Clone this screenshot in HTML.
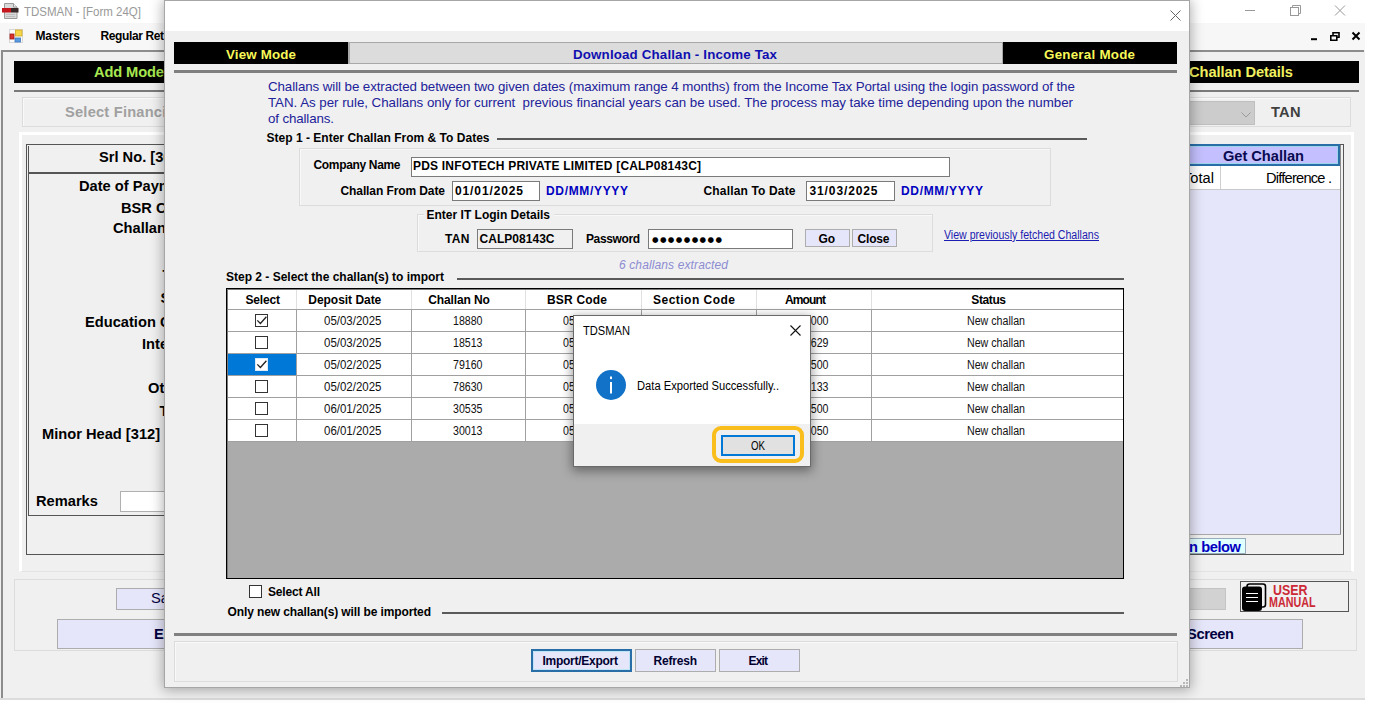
<!DOCTYPE html>
<html><head><meta charset="utf-8"><title>TDSMAN - [Form 24Q]</title><style>
html,body{margin:0;padding:0;}
body{width:1377px;height:703px;overflow:hidden;background:#fff;font-family:'Liberation Sans',sans-serif;}
#root{position:relative;width:1377px;height:703px;overflow:hidden;}
#root>div{position:absolute;}
.t{white-space:pre;}
svg{display:block;}
</style></head><body><div id="root">
<div style="left:0px;top:0px;width:1365px;height:700px;background:#f0f0f0;"></div>
<div style="left:0px;top:0px;width:1365px;height:23px;background:#fff;"></div>
<div style="left:0px;top:23px;width:1365px;height:27px;background:#f7f7f7;"></div>
<div style="left:1px;top:50px;width:1363px;height:2px;background:#8c8c8c;"></div>
<div style="left:1px;top:50px;width:2px;height:648px;background:#8c8c8c;"></div>
<div style="left:0px;top:698px;width:1365px;height:2px;background:#dcdcdc;"></div>
<div style="left:2px;top:3px;width:17px;height:16px;"><svg width="17" height="16" viewBox="0 0 17 16"><path d="M2.5 .5h9l3.5 3.5v11.5h-12.5z" fill="#d9d9d9" stroke="#9a9a9a" stroke-width="1"/><path d="M11.5 .5v3.5h3.5" fill="#f4f4f4" stroke="#9a9a9a" stroke-width="1"/><rect x="0" y="5" width="9" height="4.5" fill="#c4161c"/><rect x="9" y="5" width="7.5" height="4.5" fill="#3a2a2a"/><rect x="4" y="11" width="9" height="1" fill="#bdbdbd"/><rect x="4" y="13" width="9" height="1" fill="#bdbdbd"/></svg></div>
<div class="t" style="left:24px;top:5.86px;font-size:12px;line-height:12px;color:#999;transform:scaleX(0.9589);transform-origin:0 0;">TDSMAN - [Form 24Q]</div>
<div style="left:1244px;top:0px;width:121px;height:23px;"><svg width="121" height="23" viewBox="0 0 121 23"><g stroke="#999" stroke-width="1" fill="none"><path d="M1 10.5h10"/><rect x="46.5" y="7.5" width="8" height="8"/><path d="M48.5 7.5v-2h8v8h-2"/><path d="M91 5.500l10 10M101 5.500l-10 10"/></g></svg></div>
<div style="left:9px;top:29px;width:15px;height:14px;"><svg width="15" height="14" viewBox="0 0 15 14"><rect x=".5" y=".5" width="13" height="13" fill="#fafafa" stroke="#d8d8d8"/><rect x="1" y="5" width="4" height="5" fill="#d9332b" stroke="#a01818" stroke-width=".8"/><rect x="6.500" y="1" width="6.500" height="6" fill="#f6d648" stroke="#d0a820" stroke-width=".8"/><rect x="6" y="9" width="5.500" height="4" fill="#5b9be0" stroke="#3b78c0" stroke-width=".8"/></svg></div>
<div class="t" style="left:35.5px;top:29.86px;font-size:12px;line-height:12px;color:#000;font-weight:bold;letter-spacing:-0.143px;">Masters</div>
<div class="t" style="left:100.5px;top:29.86px;font-size:12px;line-height:12px;color:#000;font-weight:bold;letter-spacing:-0.382px;">Regular Returns</div>
<div style="left:1308px;top:28px;width:56px;height:16px;"><svg width="56" height="16" viewBox="0 0 56 16"><g fill="none" stroke="#000" stroke-width="1.6"><path d="M3 11.200h6" stroke-width="2"/><path d="M22.800 7.800h6v4.400h-6z"/><path d="M25 7.500v-2.700h6v4.400h-2"/><path d="M44.500 4.500l7 7M51.500 4.500l-7 7" stroke-width="2"/></g></svg></div>
<div style="left:14px;top:61px;width:1345px;height:22px;background:#000;"></div>
<div class="t" style="left:94px;top:64.6px;font-size:14.67px;line-height:14.67px;color:#a8e850;font-weight:bold;letter-spacing:-0.118px;">Add Mode</div>
<div class="t" style="left:1189px;top:64.6px;font-size:14.67px;line-height:14.67px;color:#f0f060;font-weight:bold;letter-spacing:-0.076px;">Challan Details</div>
<div style="left:14px;top:90px;width:1345px;height:2px;background:#7a7a7a;"></div>
<div style="left:22px;top:97px;width:1329px;height:30px;border:1px solid #dcdcdc;box-sizing:border-box;box-shadow:inset 1px 1px 0 #f8f8f8;"></div>
<div class="t" style="left:65px;top:104.6px;font-size:14.67px;line-height:14.67px;color:#a0a0a0;font-weight:bold;letter-spacing:0.209px;">Select Financial Year</div>
<div style="left:1100px;top:101px;width:155px;height:23.5px;background:#cccccc;border:1px solid #bfbfbf;box-sizing:border-box;"></div>
<div style="left:1241px;top:111px;width:10px;height:8px;"><svg width="10" height="8" viewBox="0 0 10 8"><path d="M.5 1.500l4.500 4.500 4.500-4.500" fill="none" stroke="#9a9a9a" stroke-width="1"/></svg></div>
<div class="t" style="left:1271px;top:104.6px;font-size:14.67px;line-height:14.67px;color:#404040;font-weight:bold;letter-spacing:0.234px;">TAN</div>
<div style="left:19px;top:132px;width:1335px;height:440px;border:3px solid #fff;border-bottom:1px solid #e4e4e4;box-sizing:border-box;"></div>
<div style="left:26px;top:144px;width:1318px;height:411px;border:1px solid #555;box-sizing:border-box;"></div>
<div style="left:28px;top:146px;width:1313px;height:28px;border:1px solid #555;border-width:0 0 2px 1px;box-sizing:border-box;"></div>
<div style="left:28px;top:146px;width:1px;height:370px;background:#555;"></div>
<div class="t" style="left:99px;top:149.6px;font-size:14.67px;line-height:14.67px;color:#000;font-weight:bold;">Srl No. [30]</div>
<div class="t" style="left:79px;top:178.6px;font-size:14.67px;line-height:14.67px;color:#000;font-weight:bold;">Date of Payment</div>
<div class="t" style="left:121px;top:200.6px;font-size:14.67px;line-height:14.67px;color:#000;font-weight:bold;">BSR Code</div>
<div class="t" style="left:113px;top:220.6px;font-size:14.67px;line-height:14.67px;color:#000;font-weight:bold;">Challan No</div>
<div class="t" style="left:85px;top:314.6px;font-size:14.67px;line-height:14.67px;color:#000;font-weight:bold;">Education Cess</div>
<div class="t" style="left:142px;top:336.6px;font-size:14.67px;line-height:14.67px;color:#000;font-weight:bold;">Interest</div>
<div class="t" style="left:148px;top:380.6px;font-size:14.67px;line-height:14.67px;color:#000;font-weight:bold;">Others</div>
<div class="t" style="left:42px;top:426.6px;font-size:14.67px;line-height:14.67px;color:#000;font-weight:bold;">Minor Head [312]</div>
<div class="t" style="left:36px;top:493.6px;font-size:14.67px;line-height:14.67px;color:#000;font-weight:bold;">Remarks</div>
<div class="t" style="left:162.5px;top:267.6px;font-size:14.67px;line-height:14.67px;color:#000;font-weight:bold;">T</div>
<div class="t" style="left:160.5px;top:290.6px;font-size:14.67px;line-height:14.67px;color:#000;font-weight:bold;">S</div>
<div class="t" style="left:159.5px;top:403.6px;font-size:14.67px;line-height:14.67px;color:#000;font-weight:bold;">T</div>
<div style="left:120px;top:491px;width:600px;height:21px;background:#fff;border:1px solid #b0b0b0;box-sizing:border-box;"></div>
<div style="left:28px;top:515px;width:700px;height:1px;background:#555;"></div>
<div style="left:1100px;top:144px;width:240px;height:22px;background:#c4c0ff;border:2px solid #2a6ea8;box-shadow:inset 0 0 0 1px #9fd4ee;box-sizing:border-box;"></div>
<div class="t" style="left:1223px;top:148.6px;font-size:14.67px;line-height:14.67px;color:#0a0a50;font-weight:bold;letter-spacing:-0.044px;">Get Challan</div>
<div style="left:1100px;top:166px;width:241px;height:23px;background:#fff;"></div>
<div style="left:1220px;top:166px;width:1px;height:23px;background:#d0d0d0;"></div>
<div style="left:1100px;top:189px;width:241px;height:1px;background:#c8c8c8;"></div>
<div class="t" style="left:1183px;top:170.6px;font-size:14.67px;line-height:14.67px;color:#000;">Total</div>
<div class="t" style="left:1266px;top:170.6px;font-size:14.67px;line-height:14.67px;color:#000;letter-spacing:-0.789px;">Difference .</div>
<div style="left:1100px;top:190px;width:241px;height:345px;background:#e6e6fa;"></div>
<div style="left:1340px;top:145px;width:1px;height:390px;background:#8a8a8a;"></div>
<div style="left:1100px;top:534px;width:241px;height:1px;background:#a8a8a8;"></div>
<div style="left:1100px;top:538px;width:146px;height:16px;background:#e0ffff;border:1px solid #9ab;box-sizing:border-box;"></div>
<div class="t" style="left:1189px;top:539.6px;font-size:14.67px;line-height:14.67px;color:#0000c0;font-weight:bold;letter-spacing:-0.426px;">n below</div>
<div style="left:14px;top:579px;width:1343px;height:72px;border:1px solid #dcdcdc;box-sizing:border-box;"></div>
<div style="left:116px;top:588px;width:300px;height:21.5px;background:#e6e6fa;border:1px solid #adadad;box-sizing:border-box;"></div>
<div class="t" style="left:151px;top:590.6px;font-size:14.67px;line-height:14.67px;color:#000040;">Save</div>
<div style="left:57px;top:619px;width:1246px;height:29.5px;background:#e6e6fa;border:1px solid #adadad;box-sizing:border-box;"></div>
<div class="t" style="left:154px;top:626.6px;font-size:14.67px;line-height:14.67px;color:#000040;font-weight:bold;">Exit</div>
<div class="t" style="left:1187px;top:626.6px;font-size:14.67px;line-height:14.67px;color:#000040;font-weight:bold;letter-spacing:-0.377px;">Screen</div>
<div style="left:1100px;top:588px;width:125.5px;height:21.5px;background:#d2d2d2;border:1px solid #c4c4c4;box-sizing:border-box;"></div>
<div style="left:1240px;top:581px;width:109px;height:30.5px;border:1px solid #555;box-sizing:border-box;background:#f0f0f0;"></div>
<div style="left:1242px;top:583px;width:25px;height:28px;"><svg width="25" height="28" viewBox="0 0 25 28"><rect x="5" y="1" width="18.500" height="23" rx="2.500" fill="#f0f0f0" stroke="#000" stroke-width="1.600"/><rect x="0" y="3.500" width="20" height="24.500" rx="3" fill="#000"/><g stroke="#fff" stroke-width="1.200"><path d="M4 10.500h12M4 14.500h12M4 18.500h12"/></g></svg></div>
<div class="t" style="left:1273px;top:582.32px;font-size:15px;line-height:15px;color:#cc2936;font-weight:bold;transform:scaleX(0.8278);transform-origin:0 0;">USER</div>
<div class="t" style="left:1269px;top:595.17px;font-size:14px;line-height:14px;color:#cc2936;font-weight:bold;transform:scaleX(0.7666);transform-origin:0 0;">MANUAL</div>
<div style="left:164px;top:0px;width:1026px;height:688px;background:#f0f0f0;box-shadow:0 1px 12px 1px rgba(0,0,0,.32);border:1px solid #a6a6a6;box-sizing:border-box;"></div>
<div style="left:165px;top:1px;width:1024px;height:30px;background:#fff;"></div>
<div style="left:1170px;top:10px;width:11px;height:11px;"><svg width="11" height="11" viewBox="0 0 11 11"><path d="M.5.500l10 10M10.500.500l-10 10" stroke="#666" stroke-width="1" fill="none"/></svg></div>
<div style="left:174px;top:42px;width:174px;height:22px;background:#000;"></div>
<div style="left:348px;top:42px;width:655px;height:22px;background:#dcdcdc;border:1px solid #a8a8a8;border-width:1px 1px 1px 2px;box-sizing:border-box;"></div>
<div style="left:1003px;top:42px;width:174px;height:22px;background:#000;"></div>
<div class="t" style="left:226px;top:47.74px;font-size:13.33px;line-height:13.33px;color:#f8f858;font-weight:bold;letter-spacing:0.171px;">View Mode</div>
<div class="t" style="left:573px;top:47.74px;font-size:13.33px;line-height:13.33px;color:#1010b0;font-weight:bold;letter-spacing:0.154px;">Download Challan - Income Tax</div>
<div class="t" style="left:1044px;top:47.74px;font-size:13.33px;line-height:13.33px;color:#f8f858;font-weight:bold;letter-spacing:0.260px;">General Mode</div>
<div style="left:174px;top:70px;width:1003px;height:3px;background:#808080;"></div>
<div class="t" style="left:268px;top:79.74px;font-size:13.33px;line-height:13.33px;color:#22229a;letter-spacing:-0.087px;">Challans will be extracted between two given dates (maximum range 4 months) from the Income Tax Portal using the login password of the</div>
<div class="t" style="left:268px;top:95.74px;font-size:13.33px;line-height:13.33px;color:#22229a;letter-spacing:-0.032px;">TAN. As per rule, Challans only for current  previous financial years can be used. The process may take time depending upon the number</div>
<div class="t" style="left:268px;top:111.74px;font-size:13.33px;line-height:13.33px;color:#22229a;letter-spacing:-0.129px;">of challans.</div>
<div class="t" style="left:266.5px;top:131.86px;font-size:12px;line-height:12px;color:#000;font-weight:bold;letter-spacing:0.014px;">Step 1 - Enter Challan From &amp; To Dates</div>
<div style="left:497px;top:138px;width:590px;height:2px;background:#5a5a5a;"></div>
<div style="left:299px;top:148px;width:752px;height:58px;border:1px solid #dcdcdc;box-sizing:border-box;box-shadow:inset 1px 1px 0 #f8f8f8;"></div>
<div class="t" style="left:313.5px;top:158.86px;font-size:12px;line-height:12px;color:#000;font-weight:bold;letter-spacing:-0.336px;">Company Name</div>
<div style="left:411px;top:157px;width:539px;height:20px;background:#fff;border:1px solid #7a7a7a;box-sizing:border-box;"></div>
<div class="t" style="left:413px;top:159.86px;font-size:12px;line-height:12px;color:#000;font-weight:bold;letter-spacing:0.194px;">PDS INFOTECH PRIVATE LIMITED [CALP08143C]</div>
<div class="t" style="left:340.5px;top:184.86px;font-size:12px;line-height:12px;color:#000;font-weight:bold;letter-spacing:-0.095px;">Challan From Date</div>
<div style="left:452px;top:181px;width:88px;height:20px;background:#fff;border:1px solid #7a7a7a;box-sizing:border-box;"></div>
<div class="t" style="left:455px;top:184.86px;font-size:12px;line-height:12px;color:#000;font-weight:bold;letter-spacing:0.882px;">01/01/2025</div>
<div class="t" style="left:546px;top:184.86px;font-size:12px;line-height:12px;color:#0000c0;font-weight:bold;letter-spacing:0.666px;">DD/MM/YYYY</div>
<div class="t" style="left:703.5px;top:184.86px;font-size:12px;line-height:12px;color:#000;font-weight:bold;letter-spacing:0.158px;">Challan To Date</div>
<div style="left:806px;top:181px;width:89px;height:20px;background:#fff;border:1px solid #7a7a7a;box-sizing:border-box;"></div>
<div class="t" style="left:809.5px;top:184.86px;font-size:12px;line-height:12px;color:#000;font-weight:bold;letter-spacing:0.882px;">31/03/2025</div>
<div class="t" style="left:901px;top:184.86px;font-size:12px;line-height:12px;color:#0000c0;font-weight:bold;letter-spacing:0.666px;">DD/MM/YYYY</div>
<div style="left:417px;top:214px;width:516px;height:38px;border:1px solid #dcdcdc;box-sizing:border-box;box-shadow:inset 1px 1px 0 #f8f8f8;"></div>
<div style="left:424px;top:208px;width:130px;height:14px;background:#f0f0f0;"></div>
<div class="t" style="left:426.5px;top:208.86px;font-size:12px;line-height:12px;color:#000;font-weight:bold;letter-spacing:0.007px;">Enter IT Login Details</div>
<div class="t" style="left:445px;top:232.86px;font-size:12px;line-height:12px;color:#000;font-weight:bold;letter-spacing:0.364px;">TAN</div>
<div style="left:477px;top:229px;width:96px;height:20px;background:#f0f0f0;border:1px solid #7a7a7a;box-sizing:border-box;"></div>
<div class="t" style="left:479.5px;top:232.86px;font-size:12px;line-height:12px;color:#000;font-weight:bold;letter-spacing:0.033px;">CALP08143C</div>
<div class="t" style="left:586px;top:232.86px;font-size:12px;line-height:12px;color:#000;font-weight:bold;letter-spacing:-0.384px;">Password</div>
<div style="left:648px;top:229px;width:145px;height:20px;background:#fff;border:1px solid #7a7a7a;box-sizing:border-box;"></div>
<div class="t" style="left:652px;top:235.67px;font-size:7.5px;line-height:7.5px;color:#000;letter-spacing:1.388px;font-family:'DejaVu Sans',sans-serif;">●●●●●●●●●</div>
<div style="left:805px;top:229px;width:45px;height:18px;background:#e6e6fa;border:1px solid #adadad;box-sizing:border-box;"></div>
<div class="t" style="left:818.5px;top:232.86px;font-size:12px;line-height:12px;color:#000;font-weight:bold;letter-spacing:-0.164px;">Go</div>
<div style="left:852px;top:229px;width:45px;height:18px;background:#e6e6fa;border:1px solid #adadad;box-sizing:border-box;"></div>
<div class="t" style="left:857.5px;top:232.86px;font-size:12px;line-height:12px;color:#000;font-weight:bold;letter-spacing:-0.169px;">Close</div>
<div class="t" style="left:944px;top:228.86px;font-size:12px;line-height:12px;color:#1c1cb0;transform:scaleX(0.8813);transform-origin:0 0;text-decoration:underline;">View previously fetched Challans</div>
<div class="t" style="left:619px;top:258.86px;font-size:12px;line-height:12px;color:#8c8cd2;font-style:italic;letter-spacing:0.120px;">6 challans extracted</div>
<div class="t" style="left:226px;top:270.86px;font-size:12px;line-height:12px;color:#000;font-weight:bold;letter-spacing:-0.001px;">Step 2 - Select the challan(s) to import</div>
<div style="left:457px;top:278px;width:667px;height:2px;background:#5a5a5a;"></div>
<div style="left:226px;top:288px;width:898px;height:291px;background:#000;"></div>
<div style="left:227px;top:289px;width:896px;height:289px;background:#ababab;"></div>
<div style="left:227px;top:289px;width:896px;height:1px;background:#7a7a7a;"></div>
<div style="left:227px;top:289px;width:1px;height:289px;background:#7a7a7a;"></div>
<div style="left:228px;top:290px;width:895px;height:152px;background:#fff;"></div>
<div style="left:296px;top:290px;width:1px;height:19px;background:#e0e0e0;"></div>
<div style="left:411px;top:290px;width:1px;height:19px;background:#e0e0e0;"></div>
<div style="left:525px;top:290px;width:1px;height:19px;background:#e0e0e0;"></div>
<div style="left:641px;top:290px;width:1px;height:19px;background:#e0e0e0;"></div>
<div style="left:756px;top:290px;width:1px;height:19px;background:#e0e0e0;"></div>
<div style="left:871px;top:290px;width:1px;height:19px;background:#e0e0e0;"></div>
<div style="left:228px;top:309px;width:895px;height:1px;background:#a0a0a0;"></div>
<div style="left:228px;top:331px;width:895px;height:1px;background:#a0a0a0;"></div>
<div style="left:228px;top:353px;width:895px;height:1px;background:#a0a0a0;"></div>
<div style="left:228px;top:375px;width:895px;height:1px;background:#a0a0a0;"></div>
<div style="left:228px;top:397px;width:895px;height:1px;background:#a0a0a0;"></div>
<div style="left:228px;top:419px;width:895px;height:1px;background:#a0a0a0;"></div>
<div style="left:228px;top:441px;width:895px;height:1px;background:#a0a0a0;"></div>
<div style="left:296px;top:309px;width:1px;height:133px;background:#a0a0a0;"></div>
<div style="left:411px;top:309px;width:1px;height:133px;background:#a0a0a0;"></div>
<div style="left:525px;top:309px;width:1px;height:133px;background:#a0a0a0;"></div>
<div style="left:641px;top:309px;width:1px;height:133px;background:#a0a0a0;"></div>
<div style="left:756px;top:309px;width:1px;height:133px;background:#a0a0a0;"></div>
<div style="left:871px;top:309px;width:1px;height:133px;background:#a0a0a0;"></div>
<div style="left:228px;top:354px;width:68px;height:21px;background:#0078d7;"></div>
<div class="t" style="left:245.5px;top:293.86px;font-size:12px;line-height:12px;color:#000;font-weight:bold;letter-spacing:-0.171px;">Select</div>
<div class="t" style="left:308.3px;top:293.86px;font-size:12px;line-height:12px;color:#000;font-weight:bold;letter-spacing:-0.032px;">Deposit Date</div>
<div class="t" style="left:428.3px;top:293.86px;font-size:12px;line-height:12px;color:#000;font-weight:bold;letter-spacing:-0.130px;">Challan No</div>
<div class="t" style="left:547px;top:293.86px;font-size:12px;line-height:12px;color:#000;font-weight:bold;letter-spacing:0.190px;">BSR Code</div>
<div class="t" style="left:653px;top:293.86px;font-size:12px;line-height:12px;color:#000;font-weight:bold;letter-spacing:0.484px;">Section Code</div>
<div class="t" style="left:785px;top:293.86px;font-size:12px;line-height:12px;color:#000;font-weight:bold;letter-spacing:-0.864px;">Amount</div>
<div class="t" style="left:971.3px;top:293.86px;font-size:12px;line-height:12px;color:#000;font-weight:bold;letter-spacing:-0.395px;">Status</div>
<div class="t" style="left:323.8px;top:314.86px;font-size:12px;line-height:12px;color:#111;transform:scaleX(0.9574);transform-origin:0 0;">05/03/2025</div>
<div class="t" style="left:453px;top:314.86px;font-size:12px;line-height:12px;color:#111;transform:scaleX(0.8841);transform-origin:0 0;">18880</div>
<div class="t" style="left:563.3px;top:314.86px;font-size:12px;line-height:12px;color:#111;transform:scaleX(0.8841);transform-origin:0 0;">0510308</div>
<div class="t" style="left:690px;top:314.86px;font-size:12px;line-height:12px;color:#111;transform:scaleX(0.8741);transform-origin:0 0;">192</div>
<div class="t" style="left:799.3px;top:314.86px;font-size:12px;line-height:12px;color:#111;transform:scaleX(0.8841);transform-origin:0 0;">15000</div>
<div class="t" style="left:967px;top:314.86px;font-size:12px;line-height:12px;color:#111;transform:scaleX(0.8873);transform-origin:0 0;">New challan</div>
<div style="left:255px;top:314px;width:13px;height:13px;background:#fff;border:1px solid #333;box-sizing:border-box;"><svg width="13" height="13" viewBox="0 0 13 13" style="position:absolute;left:-1px;top:-1px"><path d="M2.300 6.400l3.100 3.100 6-6.800" fill="none" stroke="#222" stroke-width="1.300"/></svg></div>
<div class="t" style="left:323.8px;top:336.86px;font-size:12px;line-height:12px;color:#111;transform:scaleX(0.9574);transform-origin:0 0;">05/03/2025</div>
<div class="t" style="left:453px;top:336.86px;font-size:12px;line-height:12px;color:#111;transform:scaleX(0.8841);transform-origin:0 0;">18513</div>
<div class="t" style="left:563.3px;top:336.86px;font-size:12px;line-height:12px;color:#111;transform:scaleX(0.8841);transform-origin:0 0;">0510308</div>
<div class="t" style="left:690px;top:336.86px;font-size:12px;line-height:12px;color:#111;transform:scaleX(0.8741);transform-origin:0 0;">192</div>
<div class="t" style="left:799.3px;top:336.86px;font-size:12px;line-height:12px;color:#111;transform:scaleX(0.8841);transform-origin:0 0;">24629</div>
<div class="t" style="left:967px;top:336.86px;font-size:12px;line-height:12px;color:#111;transform:scaleX(0.8873);transform-origin:0 0;">New challan</div>
<div style="left:255px;top:336px;width:13px;height:13px;background:#fff;border:1px solid #333;box-sizing:border-box;"></div>
<div class="t" style="left:323.8px;top:358.86px;font-size:12px;line-height:12px;color:#111;transform:scaleX(0.9574);transform-origin:0 0;">05/02/2025</div>
<div class="t" style="left:453px;top:358.86px;font-size:12px;line-height:12px;color:#111;transform:scaleX(0.8841);transform-origin:0 0;">79160</div>
<div class="t" style="left:563.3px;top:358.86px;font-size:12px;line-height:12px;color:#111;transform:scaleX(0.8841);transform-origin:0 0;">0510308</div>
<div class="t" style="left:690px;top:358.86px;font-size:12px;line-height:12px;color:#111;transform:scaleX(0.8741);transform-origin:0 0;">192</div>
<div class="t" style="left:799.3px;top:358.86px;font-size:12px;line-height:12px;color:#111;transform:scaleX(0.8841);transform-origin:0 0;">12500</div>
<div class="t" style="left:967px;top:358.86px;font-size:12px;line-height:12px;color:#111;transform:scaleX(0.8873);transform-origin:0 0;">New challan</div>
<div style="left:255px;top:358px;width:13px;height:13px;background:#fff;border:1px solid #dce9f6;box-sizing:border-box;"><svg width="13" height="13" viewBox="0 0 13 13" style="position:absolute;left:-1px;top:-1px"><path d="M2.300 6.400l3.100 3.100 6-6.800" fill="none" stroke="#222" stroke-width="1.300"/></svg></div>
<div class="t" style="left:323.8px;top:380.86px;font-size:12px;line-height:12px;color:#111;transform:scaleX(0.9574);transform-origin:0 0;">05/02/2025</div>
<div class="t" style="left:453px;top:380.86px;font-size:12px;line-height:12px;color:#111;transform:scaleX(0.8841);transform-origin:0 0;">78630</div>
<div class="t" style="left:563.3px;top:380.86px;font-size:12px;line-height:12px;color:#111;transform:scaleX(0.8841);transform-origin:0 0;">0510308</div>
<div class="t" style="left:690px;top:380.86px;font-size:12px;line-height:12px;color:#111;transform:scaleX(0.8741);transform-origin:0 0;">192</div>
<div class="t" style="left:799.3px;top:380.86px;font-size:12px;line-height:12px;color:#111;transform:scaleX(0.8841);transform-origin:0 0;">18133</div>
<div class="t" style="left:967px;top:380.86px;font-size:12px;line-height:12px;color:#111;transform:scaleX(0.8873);transform-origin:0 0;">New challan</div>
<div style="left:255px;top:380px;width:13px;height:13px;background:#fff;border:1px solid #333;box-sizing:border-box;"></div>
<div class="t" style="left:323.8px;top:402.86px;font-size:12px;line-height:12px;color:#111;transform:scaleX(0.9574);transform-origin:0 0;">06/01/2025</div>
<div class="t" style="left:453px;top:402.86px;font-size:12px;line-height:12px;color:#111;transform:scaleX(0.8841);transform-origin:0 0;">30535</div>
<div class="t" style="left:563.3px;top:402.86px;font-size:12px;line-height:12px;color:#111;transform:scaleX(0.8841);transform-origin:0 0;">0510308</div>
<div class="t" style="left:690px;top:402.86px;font-size:12px;line-height:12px;color:#111;transform:scaleX(0.8741);transform-origin:0 0;">192</div>
<div class="t" style="left:799.3px;top:402.86px;font-size:12px;line-height:12px;color:#111;transform:scaleX(0.8841);transform-origin:0 0;">10500</div>
<div class="t" style="left:967px;top:402.86px;font-size:12px;line-height:12px;color:#111;transform:scaleX(0.8873);transform-origin:0 0;">New challan</div>
<div style="left:255px;top:402px;width:13px;height:13px;background:#fff;border:1px solid #333;box-sizing:border-box;"></div>
<div class="t" style="left:323.8px;top:424.86px;font-size:12px;line-height:12px;color:#111;transform:scaleX(0.9574);transform-origin:0 0;">06/01/2025</div>
<div class="t" style="left:453px;top:424.86px;font-size:12px;line-height:12px;color:#111;transform:scaleX(0.8841);transform-origin:0 0;">30013</div>
<div class="t" style="left:563.3px;top:424.86px;font-size:12px;line-height:12px;color:#111;transform:scaleX(0.8841);transform-origin:0 0;">0510308</div>
<div class="t" style="left:690px;top:424.86px;font-size:12px;line-height:12px;color:#111;transform:scaleX(0.8741);transform-origin:0 0;">192</div>
<div class="t" style="left:799.3px;top:424.86px;font-size:12px;line-height:12px;color:#111;transform:scaleX(0.8841);transform-origin:0 0;">22050</div>
<div class="t" style="left:967px;top:424.86px;font-size:12px;line-height:12px;color:#111;transform:scaleX(0.8873);transform-origin:0 0;">New challan</div>
<div style="left:255px;top:424px;width:13px;height:13px;background:#fff;border:1px solid #333;box-sizing:border-box;"></div>
<div style="left:249px;top:585px;width:13px;height:13px;background:#fff;border:1px solid #333;box-sizing:border-box;"></div>
<div class="t" style="left:268px;top:585.86px;font-size:12px;line-height:12px;color:#000;font-weight:bold;letter-spacing:-0.169px;">Select All</div>
<div class="t" style="left:227.5px;top:605.86px;font-size:12px;line-height:12px;color:#000;font-weight:bold;letter-spacing:-0.111px;">Only new challan(s) will be imported</div>
<div style="left:442px;top:611.5px;width:682px;height:2px;background:#5a5a5a;"></div>
<div style="left:174px;top:633px;width:1003px;height:3px;background:#808080;"></div>
<div style="left:174px;top:641px;width:1004px;height:41px;border:1px solid #dcdcdc;box-sizing:border-box;box-shadow:inset 1px 1px 0 #f8f8f8;"></div>
<div style="left:531px;top:649px;width:101px;height:23px;background:#e6e6fa;border:2px solid #2a6ea8;box-sizing:border-box;box-shadow:inset 0 0 0 1px #bfe4f8;"></div>
<div class="t" style="left:542.5px;top:654.86px;font-size:12px;line-height:12px;color:#000030;font-weight:bold;letter-spacing:-0.264px;">Import/Export</div>
<div style="left:635px;top:649px;width:81px;height:23px;background:#e6e6fa;border:1px solid #adadad;box-sizing:border-box;"></div>
<div class="t" style="left:653.5px;top:654.86px;font-size:12px;line-height:12px;color:#000030;font-weight:bold;letter-spacing:-0.197px;">Refresh</div>
<div style="left:719px;top:649px;width:81px;height:23px;background:#e6e6fa;border:1px solid #adadad;box-sizing:border-box;"></div>
<div class="t" style="left:748.5px;top:654.86px;font-size:12px;line-height:12px;color:#000030;font-weight:bold;letter-spacing:-0.836px;">Exit</div>
<div style="left:1179px;top:678px;width:10px;height:10px;"><svg width="10" height="10" viewBox="0 0 10 10"><g fill="#b8b8b8"><rect x="7" y="1" width="2" height="2"/><rect x="4" y="4" width="2" height="2"/><rect x="7" y="4" width="2" height="2"/><rect x="1" y="7" width="2" height="2"/><rect x="4" y="7" width="2" height="2"/><rect x="7" y="7" width="2" height="2"/></g></svg></div>
<div style="left:574px;top:316px;width:236px;height:150px;background:#fff;box-shadow:0 0 0 1px #6a6a6a, 0 3px 10px 2px rgba(0,0,0,.4);"></div>
<div style="left:574px;top:424px;width:236px;height:42px;background:#f0f0f0;"></div>
<div class="t" style="left:582.5px;top:324.86px;font-size:12px;line-height:12px;color:#000;transform:scaleX(0.9276);transform-origin:0 0;">TDSMAN</div>
<div style="left:790px;top:325px;width:11px;height:11px;"><svg width="11" height="11" viewBox="0 0 11 11"><path d="M.5.500l10 10M10.500.500l-10 10" stroke="#111" stroke-width="1.100" fill="none"/></svg></div>
<div style="left:596px;top:369.7px;width:30px;height:30px;"><svg width="30" height="30" viewBox="0 0 30 30"><circle cx="15" cy="15" r="15" fill="#1272c8"/><rect x="14" y="12" width="2" height="11.500" fill="#fff"/><rect x="14" y="6.500" width="2" height="2.600" fill="#fff"/></svg></div>
<div class="t" style="left:636.5px;top:379.86px;font-size:12px;line-height:12px;color:#000;transform:scaleX(0.9311);transform-origin:0 0;">Data Exported Successfully..</div>
<div style="left:712px;top:426px;width:92px;height:37px;border:4px solid #f9bd1c;border-radius:9px;box-sizing:border-box;"></div>
<div style="left:720.5px;top:435px;width:74px;height:21px;background:#e1e1e1;border:2px solid #0078d7;box-sizing:border-box;"></div>
<div class="t" style="left:751px;top:439.86px;font-size:12px;line-height:12px;color:#000;transform:scaleX(0.8075);transform-origin:0 0;">OK</div>
</div></body></html>
